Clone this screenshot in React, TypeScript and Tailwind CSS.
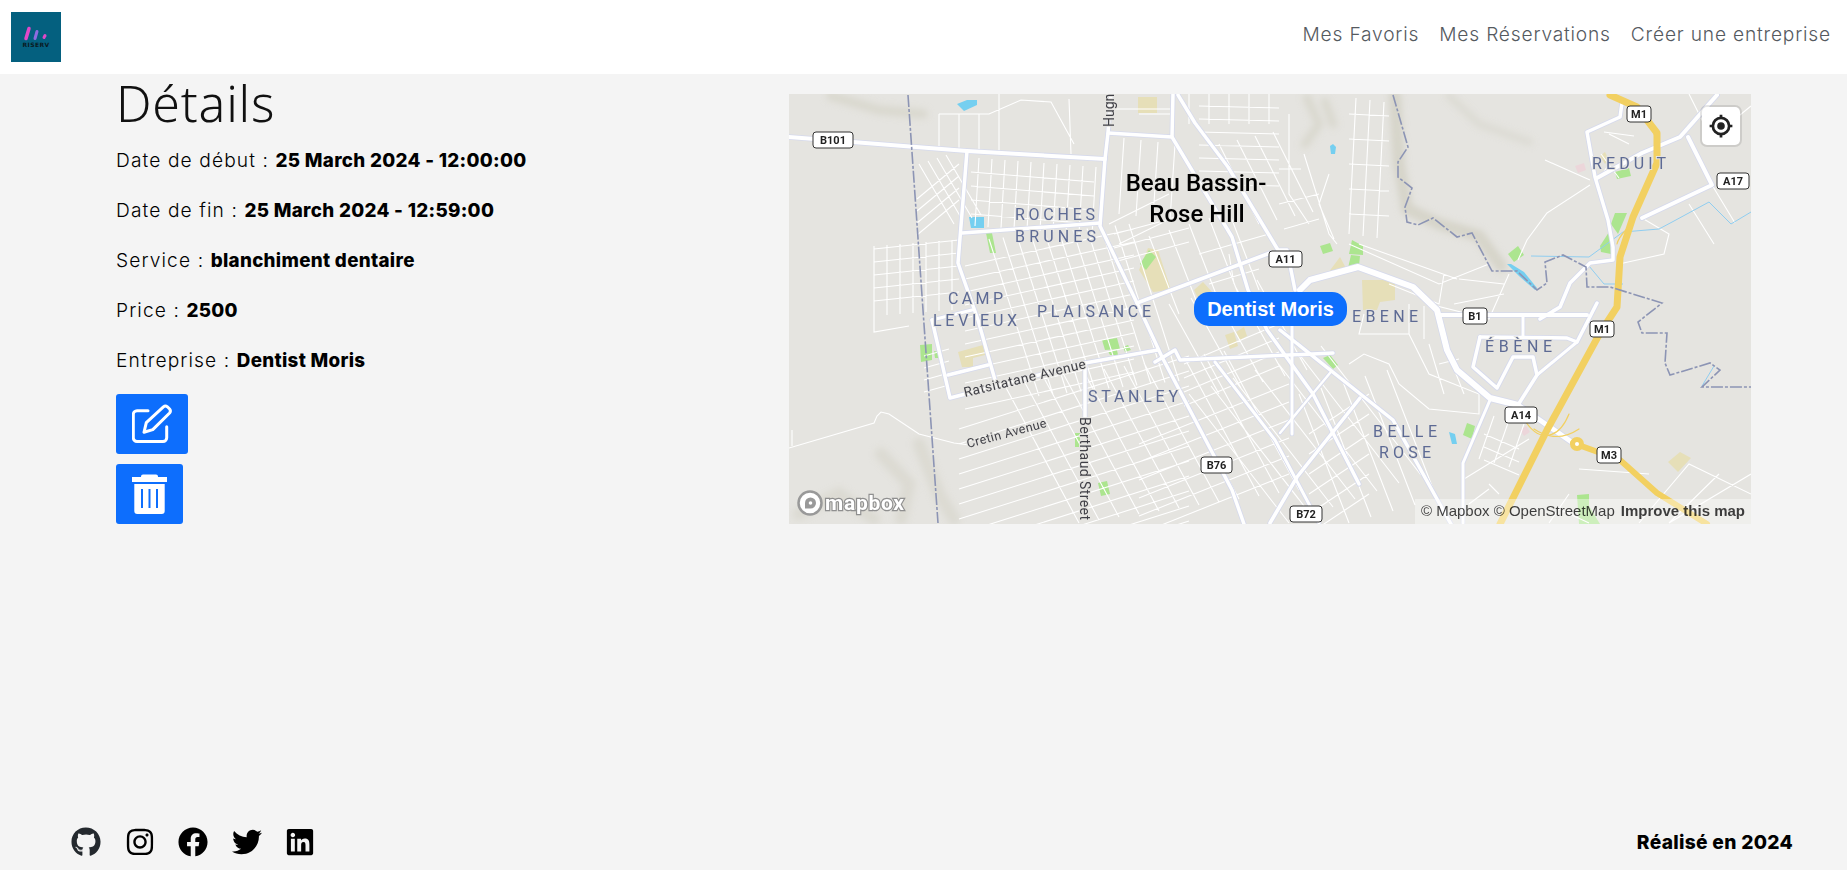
import { FaFacebook, FaGithub, FaInstagram, FaLinkedin, FaTwitter } from 'react-icons/fa';

type Pts = [number, number][];

const toPath = (pts: Pts) => 'M' + pts.map((p) => p.join(' ')).join('L');

// parallel streets: one segment repeated n times with an offset
const fam = (x1: number, y1: number, x2: number, y2: number, dx: number, dy: number, n: number) => {
  let d = '';
  for (let i = 0; i < n; i++) {
    d += `M${x1 + dx * i} ${y1 + dy * i}L${x2 + dx * i} ${y2 + dy * i}`;
  }
  return d;
};

const minorStreets = [
  // Roches Brunes
  fam(190, 64, 186, 132, 13, 1, 10),
  fam(182, 78, 305, 88, 0, 14, 4),
  // north of Beau Bassin
  fam(150, 20, 150, 56, 20, 0, 3),
  'M150 20L200 20L232 6L262 8L285 50M210 0L210 60M280 5L282 60',
  fam(335, 44, 330, 120, 17, 2, 4),
  fam(400, 0, 400, 30, 20, 0, 5),
  fam(410, 12, 490, 14, 0, 13, 7),
  fam(430, 50, 470, 130, 18, -4, 4),
  'M320 130L380 100M330 150L395 118M350 20L385 20M320 15L385 15',
  fam(325, 140, 400, 120, 0, 14, 3),
  fam(360, 142, 390, 220, 20, -6, 5),
  'M410 160L480 140M420 190L470 175M440 160L445 190',
  // Camp Levieux
  fam(85, 152, 85, 222, 13, -1, 7),
  fam(85, 155, 170, 146, 0, 13, 5),
  'M85 222L85 238L120 232',
  fam(130, 70, 165, 130, 9, -3, 4),
  fam(128, 105, 170, 70, 0, 12, 4),
  fam(135, 262, 160, 255, 0, 12, 4),
  // Plaisance
  fam(200, 145, 250, 302, 14, -1.5, 11),
  fam(176, 172, 345, 135, 0, 13, 12),
  // Stanley
  fam(215, 290, 290, 429, 20, -3, 12),
  fam(170, 335, 400, 262, 0, 15, 12),
  // centre
  fam(380, 210, 430, 300, 22, -6, 5),
  fam(395, 270, 490, 230, 0, 14, 4),
  fam(400, 300, 500, 429, 22, -8, 7),
  fam(350, 350, 500, 290, 0, 18, 6),
  // Belle Rose
  fam(510, 300, 560, 429, 22, -6, 5),
  fam(520, 340, 580, 300, 0, 20, 6),
  'M575 220L570 240L620 240L640 280L690 300L690 320L640 315L610 290L600 270L575 260L560 270',
  'M640 250L655 300M650 270L670 265M660 262L675 300',
  'M620 240L620 210M635 245L635 212',
  fam(695, 340, 730, 355, 0, 13, 3),
  fam(705, 322, 690, 365, 15, 4, 3),
  'M675 385L740 345M680 410L700 395M700 390L710 400',
  'M790 375L860 380M780 400L760 429M850 429L900 370L962 400M880 429L930 380M800 429L770 415',
  // Ebene and east of the ridge
  fam(567, 4, 560, 140, 14, 2, 3),
  fam(560, 20, 600, 22, 0, 25, 5),
  'M515 60L540 140L548 150M500 20L500 100L520 130M490 110L530 100M495 135L530 125',
  'M540 80L530 110L545 145M490 75L512 75',
  'M560 150L650 190L700 170M570 150L668 185M600 190L650 210L655 180M640 210L700 225L720 180',
  'M670 185L715 190M665 210L715 200',
  // Reduit
  'M756 66L801 86M801 91L758 119L738 146L729 166M820 40L840 50M812 60L830 84',
  'M810 85L820 70M815 38L845 42',
  'M853 124L880 140L875 160L830 170M900 110L925 150M946 129L923 91M940 30L962 12M900 0L915 30',
  // south-west empty side
  'M0 354L85 329L88 322L92 318L100 320L130 340L165 349L180 351M3 352L3 336',
  'M880 429L962 380',
];

const mainRoads = [
  { pts: [[0, 43], [178, 57], [316, 65]] as Pts, w: 4 },
  { pts: [[322, 0], [319, 39], [316, 65], [311, 132], [348, 209], [373, 263], [443, 396], [455, 430]] as Pts, w: 3.5 },
  { pts: [[173, 139], [311, 129]] as Pts, w: 3.5 },
  { pts: [[178, 57], [169, 169], [189, 226], [206, 286]] as Pts, w: 3.5 },
  { pts: [[319, 39], [383, 43], [384, 0]] as Pts, w: 3.5 },
  { pts: [[383, 43], [443, 143], [459, 196], [478, 236], [524, 300], [570, 390]] as Pts, w: 3.5 },
  { pts: [[389, 1], [406, 29], [439, 73], [489, 156], [498, 156], [506, 196]] as Pts, w: 3.5 },
  { pts: [[348, 209], [481, 159]] as Pts, w: 3.5 },
  { pts: [[143, 226], [161, 304], [296, 269], [369, 256]] as Pts, w: 3.5 },
  { pts: [[159, 281], [199, 271]] as Pts, w: 3.5 },
  { pts: [[143, 226], [183, 216]] as Pts, w: 3 },
  { pts: [[296, 269], [296, 323]] as Pts, w: 3.5 },
  { pts: [[366, 268], [386, 256], [391, 266], [544, 259]] as Pts, w: 3.5 },
  { pts: [[426, 268], [486, 346], [530, 429]] as Pts, w: 3 },
  { pts: [[491, 236], [604, 326], [658, 423], [662, 430]] as Pts, w: 3.5 },
  { pts: [[571, 304], [508, 383], [481, 429]] as Pts, w: 3.5 },
  { pts: [[491, 339], [541, 279]] as Pts, w: 2.5 },
  { pts: [[503, 229], [503, 340]] as Pts, w: 3 },
  { pts: [[511, 196], [521, 186], [569, 173], [624, 193], [648, 216], [658, 256], [668, 276], [701, 304], [729, 311]] as Pts, w: 6 },
  { pts: [[651, 221], [798, 221]] as Pts, w: 4 },
  { pts: [[734, 223], [734, 243]] as Pts, w: 3 },
  { pts: [[691, 243], [778, 244], [788, 248], [808, 209]] as Pts, w: 3.5 },
  { pts: [[691, 243], [684, 273], [708, 294], [724, 263], [744, 263], [748, 281], [729, 311]] as Pts, w: 3.5 },
  { pts: [[748, 281], [788, 248]] as Pts, w: 3 },
  { pts: [[701, 306], [674, 369], [674, 429]] as Pts, w: 3 },
  { pts: [[833, 9], [831, 23], [798, 38], [806, 83], [819, 126], [824, 153], [824, 166], [801, 169], [781, 189], [771, 213], [751, 225]] as Pts, w: 3.5 },
  { pts: [[928, 1], [891, 43], [853, 59], [808, 84]] as Pts, w: 4 },
  { pts: [[899, 43], [923, 91], [853, 124]] as Pts, w: 4 },
  { pts: [[729, 311], [784, 349]] as Pts, w: 5 },
];

const water = [
  '168,10 178,6 188,6 188,11 175,17',
  '180,123 195,123 195,134 182,134',
  '541,52 544,50 547,53 546,60 542,60',
  '718,170 722,170 735,178 748,194 746,196 730,182',
  '660,338 666,340 668,350 663,350',
];

const parks = [
  '197,139 203,139 207,159 201,159',
  '351,170 360,156 367,163 357,176',
  '313,246 328,244 331,255 316,256',
  '319,257 328,256 329,261 321,261',
  '334,253 339,251 342,256 336,258',
  '131,251 143,250 143,266 132,268',
  '145,257 150,258 150,264 146,264',
  '309,389 318,387 321,400 312,402',
  '286,339 291,339 291,353 286,353',
  '531,152 541,149 544,157 534,160',
  '560,160 563,146 574,152 574,161',
  '559,174 562,161 571,162 570,172',
  '719,160 729,152 735,161 725,168',
  '826,78 840,74 842,82 828,85',
  '822,130 826,119 838,119 829,140',
  '811,152 820,138 822,160 812,158',
  '534,264 541,261 549,271 544,275',
  '674,341 678,329 686,332 683,345',
  '788,401 800,400 800,412 811,430 790,430',
];

const sand = [
  '350,176 359,154 369,156 382,196 364,198',
  '405,196 414,188 424,199 412,210',
  '573,186 606,186 606,206 591,208 588,216 574,216',
  '539,179 551,163 558,176',
  '349,3 368,3 368,19 349,19',
  '169,258 194,251 196,261 184,264 184,273 173,273',
  '436,241 445,238 449,252 441,255',
  '447,238 455,233 458,242 451,246',
  '879,368 891,358 902,364 889,378',
  '811,62 816,58 820,66 816,70',
];

const shields = [
  { t: 'B101', x: 24, y: 38, w: 40 },
  { t: 'M1', x: 838, y: 12, w: 24 },
  { t: 'A17', x: 928, y: 79, w: 32 },
  { t: 'A11', x: 480, y: 157, w: 33 },
  { t: 'B1', x: 674, y: 214, w: 24 },
  { t: 'M1', x: 801, y: 227, w: 24 },
  { t: 'A14', x: 716, y: 313, w: 32 },
  { t: 'M3', x: 808, y: 353, w: 24 },
  { t: 'B76', x: 412, y: 363, w: 31 },
  { t: 'B72', x: 501, y: 412, w: 32 },
];

const places = [
  { t: 'ROCHES', x: 226, y: 126, l: 80 },
  { t: 'BRUNES', x: 226, y: 148, l: 81 },
  { t: 'CAMP', x: 159, y: 210, l: 55 },
  { t: 'LEVIEUX', x: 144, y: 232, l: 84 },
  { t: 'PLAISANCE', x: 248, y: 223, l: 114 },
  { t: 'STANLEY', x: 299, y: 308, l: 90 },
  { t: 'EBENE', x: 563, y: 228, l: 66 },
  { t: 'ÉBÈNE', x: 696, y: 258, l: 67 },
  { t: 'BELLE', x: 584, y: 343, l: 64 },
  { t: 'ROSE', x: 590, y: 364, l: 52 },
  { t: 'REDUIT', x: 803, y: 75, l: 74 },
];

function MapDrawing() {
  return (
    <svg viewBox="0 0 962 430" className="block h-full w-full" style={{ fontFamily: 'Roboto, sans-serif' }}>
      <defs>
        <filter id="soft" x="-20%" y="-20%" width="140%" height="140%">
          <feGaussianBlur stdDeviation="3" />
        </filter>
      </defs>
      <rect width="962" height="430" fill="#e5e4e0" />

      <g filter="url(#soft)" fill="none" strokeLinecap="round" stroke="#d6d4c9">
        <path d="M606 2L610 70L618 115L650 130L690 142L712 172" strokeWidth="12" />
        <path d="M42 2L90 16L134 20" strokeWidth="10" opacity="0.7" />
        <path d="M518 4L530 30L516 50M536 8L544 30" strokeWidth="9" opacity="0.7" />
        <path d="M660 2L690 30L740 48" strokeWidth="8" opacity="0.5" />
        <path d="M92 360L120 390L112 425M130 350L150 400L165 425M10 420L50 400L85 425" strokeWidth="13" opacity="0.55" />
      </g>

      {water.map((p) => <polygon key={p} points={p} fill="#75cff0" />)}
      {sand.map((p) => <polygon key={p} points={p} fill="#e6dfb8" />)}
      {parks.map((p) => <polygon key={p} points={p} fill="#ace58f" />)}
      <polygon points="786,72 795,69 797,76 789,79" fill="#ecd6da" />
      <polygon points="731,336 737,332 741,338 735,342" fill="#ecd6da" />

      <path d={minorStreets.join('')} fill="none" stroke="#fff" strokeWidth="1.1" />

      <path d="M742 162L800 163L834 138L870 135L885 127L920 108L942 130L962 118" fill="none" stroke="#8fcdf0" strokeWidth="1" />
      <path d="M800 172L815 190L834 190M913 292L925 272" fill="none" stroke="#8fcdf0" strokeWidth="1" />

      <g fill="none" strokeLinejoin="round" strokeLinecap="round">
        {mainRoads.map((r, i) => (
          <path key={`c${i}`} d={toPath(r.pts)} stroke="#d5d9ec" strokeWidth={r.w + 1.6} />
        ))}
        {mainRoads.map((r, i) => (
          <path key={`f${i}`} d={toPath(r.pts)} stroke="#fff" strokeWidth={r.w} />
        ))}
        <path d="M821 1L848 13L868 39L868 69L844 123L831 163L828 213L811 239L758 336L711 430" stroke="#f2d061" strokeWidth="7" />
        <path d="M784 349L831 366L868 399L918 430" stroke="#f2d061" strokeWidth="6" />
        <path d="M735 325C750 350 770 345 780 320M745 335C760 345 775 345 790 335" stroke="#f2d061" strokeWidth="1.2" />
        <path d="M845 125C840 135 830 140 828 150M865 40C872 55 870 65 866 75" stroke="#f2d061" strokeWidth="1.2" />
      </g>
      <circle cx="788" cy="350" r="7" fill="#f2d061" />
      <circle cx="788" cy="350" r="2" fill="#fff" />

      <g fill="none" stroke="#8c94b4" strokeWidth="1.6" strokeDasharray="12 2 3 2">
        <path d="M119 1L134 216L149 429" />
        <path d="M604 1L619 53L609 68L609 83L623 94L616 113L618 128L629 131L644 124L668 143L683 139L703 177L728 177L748 196L758 189L756 168L774 161L797 173L798 193L821 193L873 209L849 228L853 239L878 239L876 269L881 281L921 269L931 276L913 293L962 293" />
      </g>

      {places.map((p) => (
        <text key={p.t} x={p.x} y={p.y} fontSize="16" fill="#5d6a94" textLength={p.l} lengthAdjust="spacing" stroke="#e5e4e0" strokeWidth="2" paintOrder="stroke">
          {p.t}
        </text>
      ))}

      <g fill="#000" fontSize="24" fontWeight="500" textAnchor="middle" stroke="#e5e4e0" strokeWidth="2" paintOrder="stroke">
        <text x="407" y="97">Beau Bassin-</text>
        <text x="408" y="128">Rose Hill</text>
      </g>

      <g fill="#3f3f46" stroke="#e5e4e0" strokeWidth="2" paintOrder="stroke">
        <text transform="translate(176 303) rotate(-13.4)" fontSize="13.500" textLength="125">Ratsitatane Avenue</text>
        <text transform="translate(179 354) rotate(-15)" fontSize="12.500" textLength="82">Cretin Avenue</text>
        <text transform="translate(291 323) rotate(90)" fontSize="14" textLength="103">Berthaud Street</text>
        <text transform="translate(325 33) rotate(-90)" fontSize="14">Hugn</text>
      </g>

      {shields.map((s, i) => (
        <g key={i}>
          <rect x={s.x} y={s.y} width={s.w} height="16" rx="3" fill="#fff" stroke="#333" strokeWidth="1" />
          <text x={s.x + s.w / 2} y={s.y + 12} fontSize="11" fontWeight="700" fill="#222" textAnchor="middle">{s.t}</text>
        </g>
      ))}

      <circle cx="21" cy="409" r="11.500" fill="#fff" stroke="#999" strokeWidth="2.500" />
      <path d="M16 409a5.500 5.500 0 1 1 5.500 5.500h-5.500Z" fill="#999" />
      <circle cx="21.500" cy="409" r="1.800" fill="#fff" />
      <text x="36" y="416" fontSize="21" fontWeight="700" fill="#fff" stroke="#8f8f8f" strokeWidth="2.400" paintOrder="stroke" textLength="79">mapbox</text>
    </svg>
  );
}

function Logo() {
  return (
    <div className="flex h-[50px] w-[50px] flex-col items-center justify-center bg-[#04607f]">
      <svg viewBox="0 0 28 14" className="h-[15px] w-[28px]">
        <path d="M4 12L7 2" stroke="#e048c8" strokeWidth="3.500" strokeLinecap="round" />
        <path d="M13 12L15 5" stroke="#8f6be0" strokeWidth="3" strokeLinecap="round" />
        <path d="M22 11L23 9" stroke="#e048c8" strokeWidth="3" strokeLinecap="round" />
      </svg>
      <span className="text-[6px] leading-[7px] font-bold tracking-[0.4px] text-[#0a1a22] [font-family:'DejaVu_Sans',sans-serif]">RISERV</span>
    </div>
  );
}

function EditIcon() {
  return (
    <svg viewBox="0 0 40 40" className="h-10 w-10" fill="none" stroke="#fff" strokeWidth="3" strokeLinecap="round" strokeLinejoin="round">
      <path d="M16 6.700H5a3.700 3.700 0 0 0-3.700 3.700v23.400A3.700 3.700 0 0 0 5 37.500h26a3.700 3.700 0 0 0 3.700-3.700V22.700" />
      <path d="M12 28.300L14.300 18.600L31.400 2.800Q33.400 1.200 35.400 2.800L37.600 5Q39.200 7 37.600 9L20.800 25.600Z" />
    </svg>
  );
}

function TrashIcon() {
  return (
    <svg viewBox="0 0 35 40" className="h-10 w-[35px]" fill="#fff">
      <path d="M11 0.500h13a2 2 0 0 1 2 2V3h9v5H0V3h9v-0.500a2 2 0 0 1 2-2Z" />
      <path fillRule="evenodd" d="M2.300 10h30.400v27a3 3 0 0 1-3 3H5.300a3 3 0 0 1-3-3ZM9 15v19h2V15ZM16.500 15v19h2V15ZM24 15v19h2V15Z" />
    </svg>
  );
}

const rows = [
  { label: 'Date de début', value: '25 March 2024 - 12:00:00' },
  { label: 'Date de fin', value: '25 March 2024 - 12:59:00' },
  { label: 'Service', value: 'blanchiment dentaire' },
  { label: 'Price', value: '2500' },
  { label: 'Entreprise', value: 'Dentist Moris' },
];

const links = ['Mes Favoris', 'Mes Réservations', 'Créer une entreprise'];

export default function App() {
  return (
    <div className="flex min-h-screen flex-col bg-[#f4f4f4] font-['Inter',sans-serif] text-black">
      <nav className="flex h-[74px] items-center justify-between bg-white pr-4 pl-[11px]">
        <Logo />
        <div className="flex items-center gap-[20px] pb-[5px] text-[19.200px] font-light tracking-[0.8px] text-[#555a5f]">
          {links.map((l) => (
            <a key={l}>{l}</a>
          ))}
        </div>
      </nav>

      <main className="flex pl-[116px]">
        <div className="w-[673px]">
          <h1 className="h-[50px] font-['Noto_Sans',sans-serif] text-[50px] leading-[58px] font-light tracking-[0.8px] text-[#111]">Détails</h1>
          <div className="mt-[20px]">
            {rows.map((r) => (
              <p key={r.label} className="mb-[18px] h-[32px] text-[19.200px] leading-[32px] font-light tracking-[1.1px]">
                {r.label} : <strong className="text-[18.800px] leading-none font-extrabold tracking-[0.3px]">{r.value}</strong>
              </p>
            ))}
          </div>
          <div className="flex flex-col items-start gap-[10px]">
            <button className="flex h-[60px] w-[72px] items-center justify-center rounded-[3px] bg-[#0d6efd]">
              <EditIcon />
            </button>
            <button className="flex h-[60px] w-[67px] items-center justify-center rounded-[3px] bg-[#0d6efd]">
              <TrashIcon />
            </button>
          </div>
        </div>

        <div className="relative mt-5 h-[430px] w-[962px] overflow-hidden">
          <MapDrawing />
          <div className="absolute top-[198px] left-[405px] flex h-[34px] w-[153px] items-center justify-center rounded-[15px] bg-[#0d6efd] font-['Liberation_Sans',sans-serif] text-[20px] font-bold text-white">
            Dentist Moris
          </div>
          <button className="absolute top-[13px] right-[11px] flex h-[38px] w-[38px] items-center justify-center rounded-[5px] bg-white shadow-[0_0_0_2px_rgba(0,0,0,0.1)]">
            <svg viewBox="0 0 24 24" className="h-[26px] w-[26px]" fill="none" stroke="#222">
              <circle cx="12" cy="12" r="7.500" strokeWidth="2.500" />
              <circle cx="12" cy="12" r="3.500" fill="#222" stroke="none" />
              <path d="M12 1.500v3M12 19.500v3M1.500 12h3M19.500 12h3" strokeWidth="2.500" />
            </svg>
          </button>
          <div className="absolute right-0 bottom-0 flex h-[25px] items-center gap-[6px] bg-white/40 pr-[6px] pl-[6px] font-['Liberation_Sans',sans-serif] text-[15px] text-black/75">
            <span>© Mapbox © OpenStreetMap</span>
            <span className="font-bold">Improve this map</span>
          </div>
        </div>
      </main>

      <footer className="mt-auto flex items-center justify-between pr-[54px] pb-[13px] pl-[71px]">
        <div className="flex items-center gap-[23.500px] text-black">
          <FaGithub size={30} className="text-[#24292e]" />
          <FaInstagram size={30} />
          <FaFacebook size={30} />
          <FaTwitter size={30} />
          <FaLinkedin size={30} />
        </div>
        <p className="text-[19.200px] leading-[30px] font-extrabold tracking-[0.3px]">Réalisé en 2024</p>
      </footer>
    </div>
  );
}
